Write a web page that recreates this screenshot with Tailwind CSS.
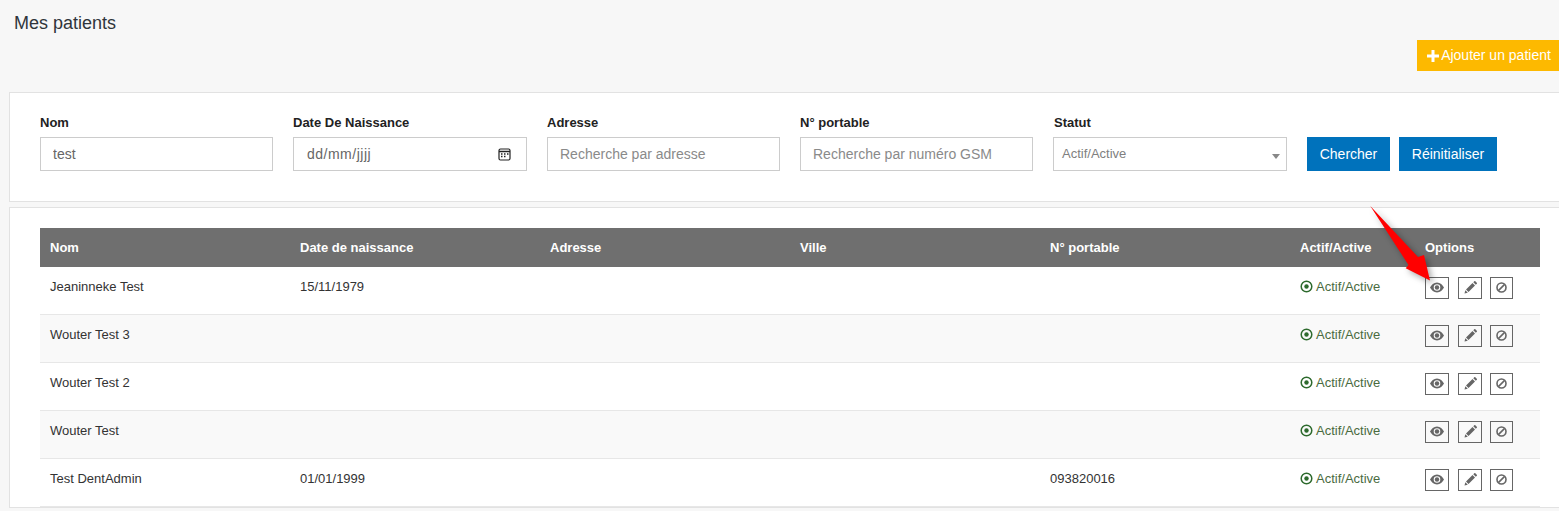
<!DOCTYPE html>
<html lang="fr">
<head>
<meta charset="utf-8">
<title>Mes patients</title>
<script src="https://cdn.jsdelivr.net/npm/@tailwindcss/browser@4"></script>
</head>
<body class="relative h-[511px] overflow-hidden bg-[#f7f7f7] font-['Liberation_Sans',Arial,sans-serif] text-[14px] text-[#333]">
    <!-- page head -->
    <h1 class="pl-[14px] pt-[13px] text-[18px] leading-[20px] text-[#2f353b]">Mes patients</h1>
    <div class="mt-[7px] flex justify-end">
        <button class="flex h-[31px] w-[142px] items-center justify-center gap-[2px] pl-[2px] bg-[#fdb900] text-[14px] text-white" type="button">
            <svg class="h-[12px] w-[12px]" viewBox="0 0 12 12" fill="#fff"><path d="M4.500 0h3v4.500h4.500v3H7.500V12h-3V7.500H0v-3h4.500z"/></svg>
            Ajouter un patient
        </button>
    </div>

    <!-- search form -->
    <div class="ml-[9px] mt-[21px] flex h-[110px] items-start gap-5 border border-r-0 border-[#e2e2e2] bg-white pl-[30px] pt-[21px]">
        <div class="w-[233px]">
            <label class="block h-[23px] text-[13px] font-bold leading-[18px] text-[#222]">Nom</label>
            <input class="h-[34px] w-full border border-[#ccc] px-3 text-[14px] text-[#666] outline-none" value="test">
        </div>
        <div class="w-[234px]">
            <label class="block h-[23px] text-[13px] font-bold leading-[18px] text-[#222]">Date De Naissance</label>
            <div class="flex h-[34px] items-center justify-between border border-[#ccc] pl-[13px] pr-[15px] text-[14px] tracking-[0.5px] text-[#666]">
                <span>dd/mm/jjjj</span>
                <svg class="h-[13px] w-[13px]" viewBox="0 0 13 13" fill="none" stroke="#222"><rect x="1" y="1" width="11" height="11" rx="1.500" stroke-width="1.200"/><path d="M1 3.500h11" stroke-width="1.500"/><path d="M3 6h1.500M6 6h1.500M9 6h1.500M3 8.500h1.500M6 8.500h1.500" stroke-width="1.300"/></svg>
            </div>
        </div>
        <div class="w-[233px]">
            <label class="block h-[23px] text-[13px] font-bold leading-[18px] text-[#222]">Adresse</label>
            <input class="h-[34px] w-full border border-[#ccc] px-3 text-[14px] outline-none placeholder:text-[#8a8a8a]" placeholder="Recherche par adresse">
        </div>
        <div class="w-[233px]">
            <label class="block h-[23px] text-[13px] font-bold leading-[18px] text-[#222]">N° portable</label>
            <input class="h-[34px] w-full border border-[#ccc] px-3 text-[14px] outline-none placeholder:text-[#8a8a8a]" placeholder="Recherche par numéro GSM">
        </div>
        <div class="w-[234px]">
            <label class="block h-[23px] pl-px text-[13px] font-bold leading-[18px] text-[#222]">Statut</label>
            <div class="relative flex h-[34px] items-center border border-[#ccc] pl-2 text-[13px] text-[#808080]">
                Actif/Active
                <span class="absolute right-[6px] top-[16px] border-x-[4px] border-t-[5px] border-x-transparent border-t-[#888]"></span>
            </div>
        </div>
        <div class="mt-[23px] flex gap-[9px]">
            <button class="h-[34px] w-[83px] bg-[#0072bc] text-[14px] text-white" type="button">Chercher</button>
            <button class="h-[34px] w-[98px] bg-[#0072bc] text-[14px] text-white" type="button">Réinitialiser</button>
        </div>
    </div>

    <!-- patients table -->
    <div class="ml-[9px] mt-[5px] border border-r-0 border-[#e2e2e2] bg-white pl-[30px] pr-[19px] pt-[20px]">
        <table class="w-[1500px] table-fixed border-collapse text-left">
            <thead>
                <tr class="h-[39px] bg-[#6f6f6f] text-[13px] font-bold text-white">
                    <th class="w-[250px] pl-[10px]">Nom</th>
                    <th class="w-[250px] pl-[10px]">Date de naissance</th>
                    <th class="w-[250px] pl-[10px]">Adresse</th>
                    <th class="w-[250px] pl-[10px]">Ville</th>
                    <th class="w-[250px] pl-[10px]">N° portable</th>
                    <th class="w-[125px] pl-[10px]">Actif/Active</th>
                    <th class="w-[125px] pl-[10px]">Options</th>
                </tr>
            </thead>
            <tbody class="text-[13px] text-[#333]">
                <tr class="h-[47px] border-b border-[#e7e7e7] bg-white">
                    <td class="pb-[7px] pl-[10px]">Jeaninneke Test</td>
                    <td class="pb-[7px] pl-[10px]">15/11/1979</td>
                    <td></td><td></td><td></td>
                    <td class="pb-[7px] pl-[10px] text-[#4a6b3f]"><span class="flex items-center gap-[3px]"><svg class="h-[13px] w-[13px]" viewBox="0 0 13 13" fill="none"><circle cx="6.500" cy="6.500" r="5.300" stroke="#2d6a2d" stroke-width="1.500"/><circle cx="6.500" cy="6.500" r="2.200" fill="#2d6a2d"/></svg>Actif/Active</span></td>
                    <td class="pb-[5px] pl-[10px]">
                        <div class="flex">
                            <span class="flex h-[22px] w-[24px] items-center justify-center border border-[#666]"><svg class="h-[11px] w-[14px]" viewBox="0 0 14 11"><path fill="#666" fill-rule="evenodd" d="M7 0.500C3.800 0.500 1.300 3 0 5.500 1.300 8 3.800 10.500 7 10.500S12.700 8 14 5.500C12.700 3 10.200 0.500 7 0.500zM7 2.200a3.300 3.300 0 1 1 0 6.600 3.300 3.300 0 0 1 0-6.600z"/><circle cx="7" cy="5.500" r="2.200" fill="#666"/></svg></span>
                            <span class="ml-[9px] flex h-[22px] w-[24px] items-center justify-center border border-[#666]"><svg class="h-[13px] w-[13px]" viewBox="0 0 13 13"><path fill="#666" d="M0.500 12.500l0.800-3.300 2.500 2.500zM2 8.500L8.500 2l2.500 2.500L4.500 11zM9.300 1.200l1-1a0.700 0.700 0 0 1 1 0l1.500 1.500a0.700 0.700 0 0 1 0 1l-1 1z"/></svg></span>
                            <span class="ml-[8px] flex h-[22px] w-[23px] items-center justify-center border border-[#666]"><svg class="h-[11px] w-[11px]" viewBox="0 0 11 11" fill="none" stroke="#666" stroke-width="1.600"><circle cx="5.500" cy="5.500" r="4.500"/><path d="M2.400 8.600l6.200-6.200"/></svg></span>
                        </div>
                    </td>
                </tr>
                <tr class="h-[48px] border-b border-[#e7e7e7] bg-[#f9f9f9]">
                    <td class="pb-[7px] pl-[10px]">Wouter Test 3</td>
                    <td></td><td></td><td></td><td></td>
                    <td class="pb-[7px] pl-[10px] text-[#4a6b3f]"><span class="flex items-center gap-[3px]"><svg class="h-[13px] w-[13px]" viewBox="0 0 13 13" fill="none"><circle cx="6.500" cy="6.500" r="5.300" stroke="#2d6a2d" stroke-width="1.500"/><circle cx="6.500" cy="6.500" r="2.200" fill="#2d6a2d"/></svg>Actif/Active</span></td>
                    <td class="pb-[5px] pl-[10px]">
                        <div class="flex">
                            <span class="flex h-[22px] w-[24px] items-center justify-center border border-[#666]"><svg class="h-[11px] w-[14px]" viewBox="0 0 14 11"><path fill="#666" fill-rule="evenodd" d="M7 0.500C3.800 0.500 1.300 3 0 5.500 1.300 8 3.800 10.500 7 10.500S12.700 8 14 5.500C12.700 3 10.200 0.500 7 0.500zM7 2.200a3.300 3.300 0 1 1 0 6.600 3.300 3.300 0 0 1 0-6.600z"/><circle cx="7" cy="5.500" r="2.200" fill="#666"/></svg></span>
                            <span class="ml-[9px] flex h-[22px] w-[24px] items-center justify-center border border-[#666]"><svg class="h-[13px] w-[13px]" viewBox="0 0 13 13"><path fill="#666" d="M0.500 12.500l0.800-3.300 2.500 2.500zM2 8.500L8.500 2l2.500 2.500L4.500 11zM9.300 1.200l1-1a0.700 0.700 0 0 1 1 0l1.500 1.500a0.700 0.700 0 0 1 0 1l-1 1z"/></svg></span>
                            <span class="ml-[8px] flex h-[22px] w-[23px] items-center justify-center border border-[#666]"><svg class="h-[11px] w-[11px]" viewBox="0 0 11 11" fill="none" stroke="#666" stroke-width="1.600"><circle cx="5.500" cy="5.500" r="4.500"/><path d="M2.400 8.600l6.200-6.200"/></svg></span>
                        </div>
                    </td>
                </tr>
                <tr class="h-[48px] border-b border-[#e7e7e7] bg-white">
                    <td class="pb-[7px] pl-[10px]">Wouter Test 2</td>
                    <td></td><td></td><td></td><td></td>
                    <td class="pb-[7px] pl-[10px] text-[#4a6b3f]"><span class="flex items-center gap-[3px]"><svg class="h-[13px] w-[13px]" viewBox="0 0 13 13" fill="none"><circle cx="6.500" cy="6.500" r="5.300" stroke="#2d6a2d" stroke-width="1.500"/><circle cx="6.500" cy="6.500" r="2.200" fill="#2d6a2d"/></svg>Actif/Active</span></td>
                    <td class="pb-[5px] pl-[10px]">
                        <div class="flex">
                            <span class="flex h-[22px] w-[24px] items-center justify-center border border-[#666]"><svg class="h-[11px] w-[14px]" viewBox="0 0 14 11"><path fill="#666" fill-rule="evenodd" d="M7 0.500C3.800 0.500 1.300 3 0 5.500 1.300 8 3.800 10.500 7 10.500S12.700 8 14 5.500C12.700 3 10.200 0.500 7 0.500zM7 2.200a3.300 3.300 0 1 1 0 6.600 3.300 3.300 0 0 1 0-6.600z"/><circle cx="7" cy="5.500" r="2.200" fill="#666"/></svg></span>
                            <span class="ml-[9px] flex h-[22px] w-[24px] items-center justify-center border border-[#666]"><svg class="h-[13px] w-[13px]" viewBox="0 0 13 13"><path fill="#666" d="M0.500 12.500l0.800-3.300 2.500 2.500zM2 8.500L8.500 2l2.500 2.500L4.500 11zM9.300 1.200l1-1a0.700 0.700 0 0 1 1 0l1.500 1.500a0.700 0.700 0 0 1 0 1l-1 1z"/></svg></span>
                            <span class="ml-[8px] flex h-[22px] w-[23px] items-center justify-center border border-[#666]"><svg class="h-[11px] w-[11px]" viewBox="0 0 11 11" fill="none" stroke="#666" stroke-width="1.600"><circle cx="5.500" cy="5.500" r="4.500"/><path d="M2.400 8.600l6.200-6.200"/></svg></span>
                        </div>
                    </td>
                </tr>
                <tr class="h-[48px] border-b border-[#e7e7e7] bg-[#f9f9f9]">
                    <td class="pb-[7px] pl-[10px]">Wouter Test</td>
                    <td></td><td></td><td></td><td></td>
                    <td class="pb-[7px] pl-[10px] text-[#4a6b3f]"><span class="flex items-center gap-[3px]"><svg class="h-[13px] w-[13px]" viewBox="0 0 13 13" fill="none"><circle cx="6.500" cy="6.500" r="5.300" stroke="#2d6a2d" stroke-width="1.500"/><circle cx="6.500" cy="6.500" r="2.200" fill="#2d6a2d"/></svg>Actif/Active</span></td>
                    <td class="pb-[5px] pl-[10px]">
                        <div class="flex">
                            <span class="flex h-[22px] w-[24px] items-center justify-center border border-[#666]"><svg class="h-[11px] w-[14px]" viewBox="0 0 14 11"><path fill="#666" fill-rule="evenodd" d="M7 0.500C3.800 0.500 1.300 3 0 5.500 1.300 8 3.800 10.500 7 10.500S12.700 8 14 5.500C12.700 3 10.200 0.500 7 0.500zM7 2.200a3.300 3.300 0 1 1 0 6.600 3.300 3.300 0 0 1 0-6.600z"/><circle cx="7" cy="5.500" r="2.200" fill="#666"/></svg></span>
                            <span class="ml-[9px] flex h-[22px] w-[24px] items-center justify-center border border-[#666]"><svg class="h-[13px] w-[13px]" viewBox="0 0 13 13"><path fill="#666" d="M0.500 12.500l0.800-3.300 2.500 2.500zM2 8.500L8.500 2l2.500 2.500L4.500 11zM9.300 1.200l1-1a0.700 0.700 0 0 1 1 0l1.500 1.500a0.700 0.700 0 0 1 0 1l-1 1z"/></svg></span>
                            <span class="ml-[8px] flex h-[22px] w-[23px] items-center justify-center border border-[#666]"><svg class="h-[11px] w-[11px]" viewBox="0 0 11 11" fill="none" stroke="#666" stroke-width="1.600"><circle cx="5.500" cy="5.500" r="4.500"/><path d="M2.400 8.600l6.200-6.200"/></svg></span>
                        </div>
                    </td>
                </tr>
                <tr class="h-[48px] border-b border-[#e7e7e7] bg-white">
                    <td class="pb-[7px] pl-[10px]">Test DentAdmin</td>
                    <td class="pb-[7px] pl-[10px]">01/01/1999</td>
                    <td></td><td></td>
                    <td class="pb-[7px] pl-[10px]">093820016</td>
                    <td class="pb-[7px] pl-[10px] text-[#4a6b3f]"><span class="flex items-center gap-[3px]"><svg class="h-[13px] w-[13px]" viewBox="0 0 13 13" fill="none"><circle cx="6.500" cy="6.500" r="5.300" stroke="#2d6a2d" stroke-width="1.500"/><circle cx="6.500" cy="6.500" r="2.200" fill="#2d6a2d"/></svg>Actif/Active</span></td>
                    <td class="pb-[5px] pl-[10px]">
                        <div class="flex">
                            <span class="flex h-[22px] w-[24px] items-center justify-center border border-[#666]"><svg class="h-[11px] w-[14px]" viewBox="0 0 14 11"><path fill="#666" fill-rule="evenodd" d="M7 0.500C3.800 0.500 1.300 3 0 5.500 1.300 8 3.800 10.500 7 10.500S12.700 8 14 5.500C12.700 3 10.200 0.500 7 0.500zM7 2.200a3.300 3.300 0 1 1 0 6.600 3.300 3.300 0 0 1 0-6.600z"/><circle cx="7" cy="5.500" r="2.200" fill="#666"/></svg></span>
                            <span class="ml-[9px] flex h-[22px] w-[24px] items-center justify-center border border-[#666]"><svg class="h-[13px] w-[13px]" viewBox="0 0 13 13"><path fill="#666" d="M0.500 12.500l0.800-3.300 2.500 2.500zM2 8.500L8.500 2l2.500 2.500L4.500 11zM9.300 1.200l1-1a0.700 0.700 0 0 1 1 0l1.500 1.500a0.700 0.700 0 0 1 0 1l-1 1z"/></svg></span>
                            <span class="ml-[8px] flex h-[22px] w-[23px] items-center justify-center border border-[#666]"><svg class="h-[11px] w-[11px]" viewBox="0 0 11 11" fill="none" stroke="#666" stroke-width="1.600"><circle cx="5.500" cy="5.500" r="4.500"/><path d="M2.400 8.600l6.200-6.200"/></svg></span>
                        </div>
                    </td>
                </tr>
            </tbody>
        </table>
    </div>

    <!-- red annotation arrow lying over the table -->
    <svg class="absolute left-[1360px] top-[200px] h-[95px] w-[85px] drop-shadow-[3px_3px_3px_rgba(0,0,0,0.35)]" viewBox="0 0 85 95">
        <path fill="#f00" d="M10.300 6L58 57 64 55 70 80.500 45.700 68.300 48.500 65z"/>
    </svg>
</body>
</html>
